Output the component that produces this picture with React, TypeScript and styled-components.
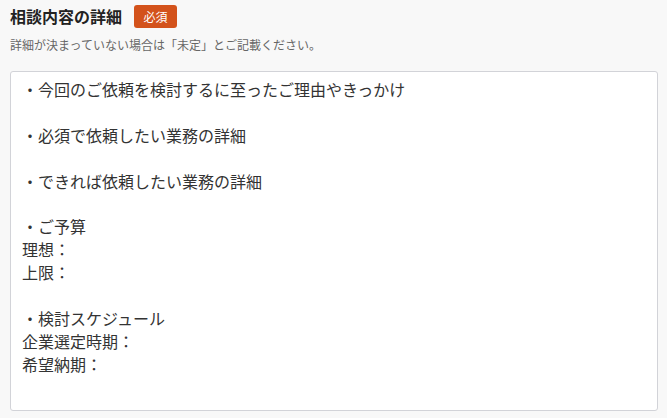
import styled, { createGlobalStyle } from "styled-components";

const GlobalStyle = createGlobalStyle`
    html, body {
        margin: 0;
        padding: 0;
        background: #f8f8f8;
    }
    body {
        font-family: "Noto Sans CJK JP", "Noto Sans", sans-serif;
        color: #333;
    }
`

const detailText = `・今回のご依頼を検討するに至ったご理由やきっかけ

・必須で依頼したい業務の詳細

・できれば依頼したい業務の詳細

・ご予算
理想：
上限：

・検討スケジュール
企業選定時期：
希望納期：`

export default function App() {
    return (
        <>
            <GlobalStyle/>
            <StyledSection>
                <HeaderRow>
                    <Title>相談内容の詳細</Title>
                    <Badge>必須</Badge>
                </HeaderRow>
                <Note>詳細が決まっていない場合は「未定」とご記載ください。</Note>
                <Field role="textbox" aria-multiline="true">{detailText}</Field>
            </StyledSection>
        </>
    );
}

const StyledSection = styled.section`
    display: flex;
    flex-direction: column;
    padding: 5px 9px 7px 10px;
    width: 667px;
    box-sizing: border-box;
`
const HeaderRow = styled.div`
    display: flex;
    align-items: center;
    gap: 12px;
    height: 23px;
`
const Title = styled.h2`
    margin: 0;
    font-size: 16px;
    font-weight: 700;
    line-height: 23px;
    color: #222;
`
const Badge = styled.span`
    display: inline-flex;
    align-items: center;
    justify-content: center;
    width: 43px;
    height: 23px;
    border-radius: 3px;
    background-color: #d3521b;
    color: #fff;
    font-size: 12px;
`
const Note = styled.p`
    margin: 8px 0 0;
    font-size: 12px;
    line-height: 18px;
    color: #666;
`
const Field = styled.div`
    margin-top: 17px;
    height: 340px;
    box-sizing: border-box;
    padding: 6px 11px;
    background: #fff;
    border: 1px solid #d2d3d8;
    border-radius: 3px;
    font-size: 16px;
    line-height: 22.9px;
    color: #333;
    white-space: pre-wrap;
`
